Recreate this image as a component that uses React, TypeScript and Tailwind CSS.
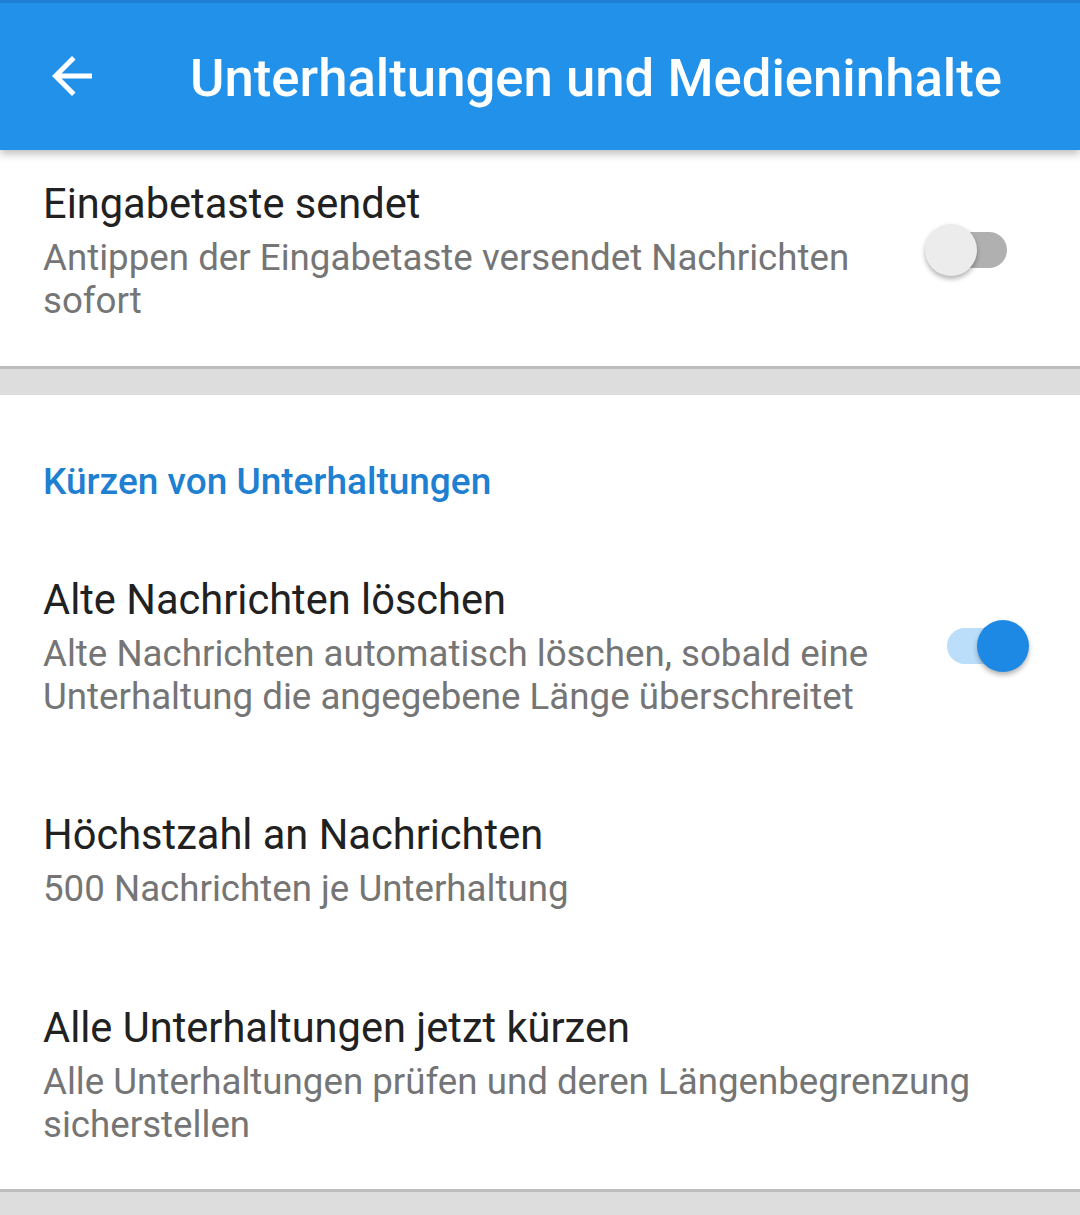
import React from "react";

type Item = {
  title: string;
  summary: string;
  toggle?: boolean;
};

function Toggle({ on }: { on: boolean }) {
  return (
    <div className="relative w-[104px] h-[52px] shrink-0">
      <div
        className={
          on
            ? "absolute left-[22px] top-[8px] w-[60px] h-[36px] rounded-full bg-[#bbdefb]"
            : "absolute left-[22px] top-[8px] w-[60px] h-[36px] rounded-full bg-[#b0b0b0]"
        }
      />
      <div
        className={
          on
            ? "absolute left-[52px] top-0 w-[52px] h-[52px] rounded-full bg-[#1e88e5] shadow-[0_3px_5px_rgba(0,0,0,0.3)]"
            : "absolute left-0 top-0 w-[52px] h-[52px] rounded-full bg-[#ececec] shadow-[0_3px_5px_rgba(0,0,0,0.3)]"
        }
      />
    </div>
  );
}

function Row({ item, className }: { item: Item; className: string }) {
  return (
    <div className={`flex items-center pl-[43px] ${className}`}>
      <div className="flex-1 pr-[40px]">
        <div className="text-[41.6px] leading-[53px] text-[#212121]">{item.title}</div>
        <div className="mt-[6px] text-[36.7px] leading-[43px] text-[#757575]">{item.summary}</div>
      </div>
      {item.toggle !== undefined && (
        <div className="pr-[51px]">
          <Toggle on={item.toggle} />
        </div>
      )}
    </div>
  );
}

export default function App() {
  return (
    <div
      className="w-[1080px] h-[1215px] overflow-hidden bg-[#dddddd]"
      style={{ fontFamily: "Roboto, 'Noto Sans', sans-serif" }}
    >
      {/* status bar remnant + toolbar */}
      <div className="relative z-10 shadow-[0_4px_8px_rgba(0,0,0,0.25)]">
        <div className="h-[3px] bg-[#1c7fd4]" />
        <div className="h-[147px] bg-[#2291e9] flex items-center">
          <svg
            viewBox="0 0 24 24"
            className="w-[60px] h-[60px] ml-[42px] mt-[-2px] fill-white"
          >
            <path d="M20 11H7.83l5.59-5.59L12 4l-8 8 8 8 1.41-1.41L7.83 13H20v-2z" />
          </svg>
          <div className="ml-[88px] mt-[4px] text-[52.7px] font-medium text-white leading-none">
            Unterhaltungen und Medieninhalte
          </div>
        </div>
      </div>

      <div className="bg-white">
        <Row
          className="pt-[27px] pb-[44px]"
          item={{
            title: "Eingabetaste sendet",
            summary: "Antippen der Eingabetaste versendet Nachrichten sofort",
            toggle: false,
          }}
        />
      </div>
      <div className="h-[3px] bg-[#bdbdbd]" />
      <div className="h-[26px]" />

      <div className="bg-white">
        <div className="pl-[43px] pt-[63px] pb-[22px] text-[37px] leading-[48px] font-medium text-[#1f7fd1]">
          Kürzen von Unterhaltungen
        </div>
        <Row
          className="pt-[45px] pb-[45px]"
          item={{
            title: "Alte Nachrichten löschen",
            summary:
              "Alte Nachrichten automatisch löschen, sobald eine Unterhaltung die angegebene Länge überschreitet",
            toggle: true,
          }}
        />
        <Row
          className="pt-[45px] pb-[46px]"
          item={{
            title: "Höchstzahl an Nachrichten",
            summary: "500 Nachrichten je Unterhaltung",
          }}
        />
        <Row
          className="pt-[45px] pb-[43px]"
          item={{
            title: "Alle Unterhaltungen jetzt kürzen",
            summary: "Alle Unterhaltungen prüfen und deren Längenbegrenzung sicherstellen",
          }}
        />
      </div>
      <div className="h-[3px] bg-[#bdbdbd]" />
    </div>
  );
}
